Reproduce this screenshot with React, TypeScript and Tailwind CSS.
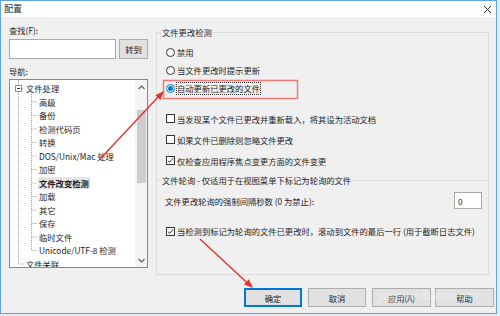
import React from "react";

const Radio = ({ checked }: { checked?: boolean }) =>
  checked ? (
    <span className="w-[9px] h-[9px] rounded-full border border-[#0078d7] bg-white flex items-center justify-center shrink-0">
      <span className="w-[5px] h-[5px] rounded-full bg-[#0078d7]" />
    </span>
  ) : (
    <span className="w-[9px] h-[9px] rounded-full border border-[#333] bg-white shrink-0" />
  );

const Check = ({ checked }: { checked?: boolean }) => (
  <span className="w-[9px] h-[9px] border border-[#333] bg-white shrink-0 flex items-center justify-center">
    {checked && (
      <svg width="7" height="7" viewBox="0 0 7 7">
        <path d="M0.8 3.6 L2.7 5.4 L6.2 1.2" stroke="#333" strokeWidth="1" fill="none" />
      </svg>
    )}
  </span>
);

type Row = { t: string; l: number; sel?: boolean };
const rows: Row[] = [
  { t: "文件处理", l: 0 },
  { t: "高级", l: 1 },
  { t: "备份", l: 1 },
  { t: "检测代码页", l: 1 },
  { t: "转换", l: 1 },
  { t: "DOS/Unix/Mac 处理", l: 1 },
  { t: "加密", l: 1 },
  { t: "文件改变检测", l: 1, sel: true },
  { t: "加载", l: 1 },
  { t: "其它", l: 1 },
  { t: "保存", l: 1 },
  { t: "临时文件", l: 1 },
  { t: "Unicode/UTF-8 检测", l: 1 },
  { t: "文件关联", l: 0 },
];

const RH = 13.5;

function Tree() {
  const cy = (i: number) => 8 + RH * i;
  return (
    <div className="mt-[2px] h-[189px] border border-[#828790] bg-white flex overflow-hidden">
      <div className="relative flex-1 pt-[1.25px]">
        <svg className="absolute inset-0 pointer-events-none" width="126" height="187">
          <g stroke="#a0a0a0" strokeWidth="1" strokeDasharray="1 1" fill="none">
            <line x1="8.5" y1="0" x2="8.5" y2={cy(13)} />
            <line x1="8.5" y1={cy(13) + 0.5} x2="14" y2={cy(13) + 0.5} />
            <line x1="12" y1={cy(0) + 0.5} x2="14" y2={cy(0) + 0.5} />
            <line x1="21.5" y1="12" x2="21.5" y2={cy(12)} />
            {rows.slice(1, 13).map((_, i) => (
              <line key={i} x1="21.5" y1={cy(i + 1) + 0.5} x2="27" y2={cy(i + 1) + 0.5} />
            ))}
          </g>
          <rect x="5.5" y="5.5" width="6" height="6" fill="white" stroke="#8c8c8c" />
          <line x1="7" y1="8.5" x2="10" y2="8.5" stroke="#333" />
        </svg>
        {rows.map((r, i) => (
          <div
            key={i}
            className={`h-[13.5px] flex items-center leading-[12px] ${r.l === 0 ? "pl-[16px]" : "pl-[28px]"}`}
          >
            {r.sel ? (
              <span className="bg-[#e5e5e5] px-[1px] font-bold">{r.t}</span>
            ) : (
              <span className={r.l === 0 ? "" : "pl-[1px]"}>{r.t}</span>
            )}
          </div>
        ))}
      </div>
      <div className="w-[12px] flex flex-col bg-[#f4f4f4]">
        <div className="h-[15px] flex items-center justify-center">
          <svg width="7" height="5" viewBox="0 0 7 5">
            <path d="M0.5 4 L3.5 1 L6.5 4" stroke="#606060" strokeWidth="1.2" fill="none" />
          </svg>
        </div>
        <div className="flex-1 flex flex-col items-center">
          <div className="mt-[15px] w-[9px] h-[73px] bg-[#cdcdcd]" />
        </div>
        <div className="h-[13px] flex items-center justify-center">
          <svg width="7" height="5" viewBox="0 0 7 5">
            <path d="M0.5 1 L3.5 4 L6.5 1" stroke="#606060" strokeWidth="1.2" fill="none" />
          </svg>
        </div>
      </div>
    </div>
  );
}

function Btn({ children, def }: { children: React.ReactNode; def?: boolean }) {
  return (
    <div
      className={`h-[19px] flex items-center justify-center bg-[#e1e1e1] ${
        def ? "border-2 border-[#0078d7]" : "border border-[#adadad]"
      }`}
    >
      {children}
    </div>
  );
}

export default function App() {
  return (
    <div className="w-[500px] h-[316px] relative overflow-hidden bg-[#e8ecf0] text-[8.3px] leading-[12px] text-[#1e1e1e] font-['Noto_Sans_CJK_SC',sans-serif]">
      <div className="w-[497px] h-[314px] border border-[#5fa2e2] flex flex-col bg-[#f0f0f0]">
        {/* title bar */}
        <div className="h-[16px] bg-white flex items-center justify-between pl-[3px] pr-[4px]">
          <span className="text-[9px]">配置</span>
          <svg width="9" height="9" viewBox="0 0 9 9">
            <path d="M1 1 L8 8 M8 1 L1 8" stroke="#333" strokeWidth="1" />
          </svg>
        </div>
        {/* body */}
        <div className="flex-1 flex flex-col">
          <div className="flex pl-[8px]">
            {/* left column */}
            <div className="w-[139px] flex flex-col">
              <div className="mt-[7px] h-[12px]">查找(F):</div>
              <div className="mt-[3px] flex gap-[3px]">
                <div className="w-[107px] h-[20px] bg-white border border-[#a9a9a9]" />
                <div className="w-[29px] h-[20px] bg-[#e1e1e1] border border-[#adadad] flex items-center justify-center">
                  转到
                </div>
              </div>
              <div className="mt-[6px] h-[12px]">导航:</div>
              <Tree />
            </div>
            {/* right column */}
            <div className="ml-[8px] w-[333px] mt-[15px] h-[243px] border border-[#dcdcdc] relative flex flex-col">
              <span className="absolute left-[4px] top-[-7px] bg-[#f0f0f0] px-[1px]">文件更改检测</span>
              <div className="pt-[10px] pl-[9px] flex flex-col">
                <div className="h-[18px] flex items-center gap-[2px]">
                  <Radio />
                  <span>禁用</span>
                </div>
                <div className="h-[18px] flex items-center gap-[2px]">
                  <Radio />
                  <span>当文件更改时提示更新</span>
                </div>
                <div className="h-[18px] flex items-center gap-[1px]">
                  <Radio checked />
                  <span className="border border-dotted border-[#333] h-[13px] flex items-center">自动更新已更改的文件</span>
                </div>
                <div className="mt-[11px] h-[21px] flex items-center gap-[2px]">
                  <Check />
                  <span>当发现某个文件已更改并重新载入，将其设为活动文档</span>
                </div>
                <div className="h-[21px] flex items-center gap-[2px]">
                  <Check />
                  <span>如果文件已删除则忽略文件更改</span>
                </div>
                <div className="h-[21px] flex items-center gap-[2px]">
                  <Check checked />
                  <span>仅检查应用程序焦点变更方面的文件变更</span>
                </div>
              </div>
              <div className="mt-[9px] border-t border-[#dcdcdc] relative">
                <span className="absolute left-[4px] top-[-7px] bg-[#f0f0f0] px-[1px]">
                  文件轮询 - 仅适用于在视图菜单下标记为轮询的文件
                </span>
              </div>
              <div className="mt-[11px] h-[17px] pl-[8px] pr-[6px] flex items-center justify-between">
                <span>文件更改轮询的强制间隔秒数 (0 为禁止):</span>
                <div className="w-[28px] h-[17px] bg-white border border-[#a9a9a9] flex items-center pl-[3px]">0</div>
              </div>
              <div className="mt-[15px] h-[14px] pl-[9px] flex items-center gap-[2px]">
                <Check checked />
                <span>当检测到标记为轮询的文件已更改时，滚动到文件的最后一行 (用于截断日志文件)</span>
              </div>
            </div>
          </div>
          {/* buttons */}
          <div className="mt-[13px] flex justify-end pr-[2px] gap-[6px]">
            <div className="w-[58px]">
              <Btn def>确定</Btn>
            </div>
            <div className="w-[58px]">
              <Btn>取消</Btn>
            </div>
            <div className="w-[59px]">
              <Btn>应用(A)</Btn>
            </div>
            <div className="w-[59px] -ml-[2px]">
              <Btn>帮助</Btn>
            </div>
          </div>
        </div>
      </div>

      {/* watermark */}
      <span className="absolute left-[378px] top-[290px] text-[13px] text-white/40 font-['Liberation_Sans',sans-serif] pointer-events-none">
        jingyan.baidu.com
      </span>

      {/* annotations */}
      <svg className="absolute inset-0 pointer-events-none" width="500" height="316">
        <rect x="163.5" y="80.5" width="134" height="18" fill="none" stroke="#f07a7a" strokeWidth="1.5" />
        <line x1="101" y1="158" x2="160" y2="95" stroke="#e8322f" strokeWidth="1.4" />
        <polygon points="164,91 160.4,100 155.3,95.2" fill="#e8322f" />
        <line x1="200" y1="239" x2="249" y2="284.5" stroke="#e8322f" strokeWidth="1.4" />
        <polygon points="253,288 244,284.5 248.8,279.3" fill="#e8322f" />
      </svg>
    </div>
  );
}
